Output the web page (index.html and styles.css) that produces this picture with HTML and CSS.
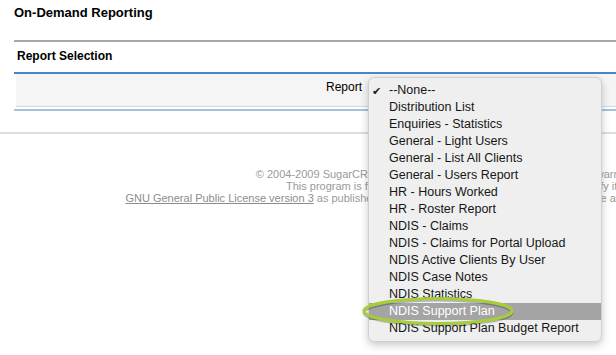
FILE: index.html
```html
<!DOCTYPE html>
<html lang="en">
<head>
    <meta charset="UTF-8">
    <meta name="viewport" content="width=device-width, initial-scale=1.0">
    <title>On-Demand Reporting</title>
    <link rel="stylesheet" href="styles.css">
</head>
<body>

<div class="page">
    <h1 class="title">On-Demand Reporting</h1>

    <!-- Report Selection -->
    <div class="section">
        <h2 class="section-head">Report Selection</h2>
        <div class="panel">
            <label class="field-label">Report</label>
            <div class="select-wrap">
                <ul class="menu">
                    <li class="checked">--None--</li>
                    <li>Distribution List</li>
                    <li>Enquiries - Statistics</li>
                    <li>General - Light Users</li>
                    <li>General - List All Clients</li>
                    <li>General - Users Report</li>
                    <li>HR - Hours Worked</li>
                    <li>HR - Roster Report</li>
                    <li>NDIS - Claims</li>
                    <li>NDIS - Claims for Portal Upload</li>
                    <li>NDIS Active Clients By User</li>
                    <li>NDIS Case Notes</li>
                    <li>NDIS Statistics</li>
                    <li class="active">NDIS Support Plan</li>
                    <li>NDIS Support Plan Budget Report</li>
                </ul>
                <svg class="ring" width="158" height="34" viewBox="0 0 158 34">
                    <ellipse cx="78" cy="18.5" rx="74" ry="12.5" fill="none" stroke="rgba(0,0,0,0.25)" stroke-width="3"></ellipse>
                    <ellipse cx="78" cy="17" rx="74" ry="12.5" fill="none" stroke="#a7cc3d" stroke-width="3.2"></ellipse>
                </svg>
            </div>
        </div>
        <div class="panel-rule"></div>
    </div>

    <div class="page-rule"></div>

    <footer class="footer">
        © 2004-2009 SugarCRM Inc. The Program is provided AS IS, without warranty. Licensed under GPLv3.<br>
        This program is free software; you can redistribute it and/or modify it under the terms of the<br>
        <a href="#">GNU General Public License version 3</a> as published by the Free Software Foundation including the additional permission set forth in the source code header.
    </footer>
</div>

</body>
</html>
```

FILE: styles.css
```css
* { box-sizing: border-box; }
html { overflow: hidden; }
body { margin: 0; min-height: 100vh; background: #fff; color: #000; font-family: "Liberation Sans", Arial, sans-serif; }
.page { width: 1014px; min-height: 100vh; }

.title { margin: 0; padding: 5px 14px 20px; font-size: 13px; line-height: 15px; font-weight: bold; }

.section { margin-left: 14px; border-top: 2px solid #a9a9a9; }
.section-head { margin: 0; height: 32px; padding: 7px 3px 0; font-size: 12px; line-height: 14px; font-weight: bold; border-bottom: 2px solid #4a86c6; }
.panel { display: flex; margin-left: 2px; height: 33px; padding-top: 6px; background: #f5f5f5; border-bottom: 1px solid #c9d9e7; }
.field-label { width: 346px; text-align: right; font-size: 12px; line-height: 14px; }
.select-wrap { position: relative; margin-left: 6px; }
.panel-rule { margin-top: 2px; height: 2px; background: #a9c0d5; }

/* open dropdown */
.menu { position: absolute; left: 0; top: -3px; width: 234px; margin: 0; padding: 4px 0; list-style: none; background: #efefef; border: 1px solid #cfcfcf; border-radius: 6px; box-shadow: 0 3px 9px rgba(0, 0, 0, 0.22); z-index: 10; }
.menu li { position: relative; height: 17px; padding-left: 20px; font-size: 12.5px; line-height: 17px; color: #161616; white-space: nowrap; }
.menu li.checked::before { content: "\2714"; position: absolute; left: 3px; top: 1px; font-family: "DejaVu Sans", sans-serif; font-size: 11px; color: #222; }
.menu li.active { background: #a4a4a4; color: #fff; }
.ring { position: absolute; left: -8px; top: 214px; z-index: 11; }

.page-rule { margin-top: 21px; height: 2px; background: #dedede; }

.footer { padding-top: 34px; text-align: center; font-size: 11px; line-height: 12px; color: #9a9a9a; }
.footer a { color: #8c8c8c; }
```
